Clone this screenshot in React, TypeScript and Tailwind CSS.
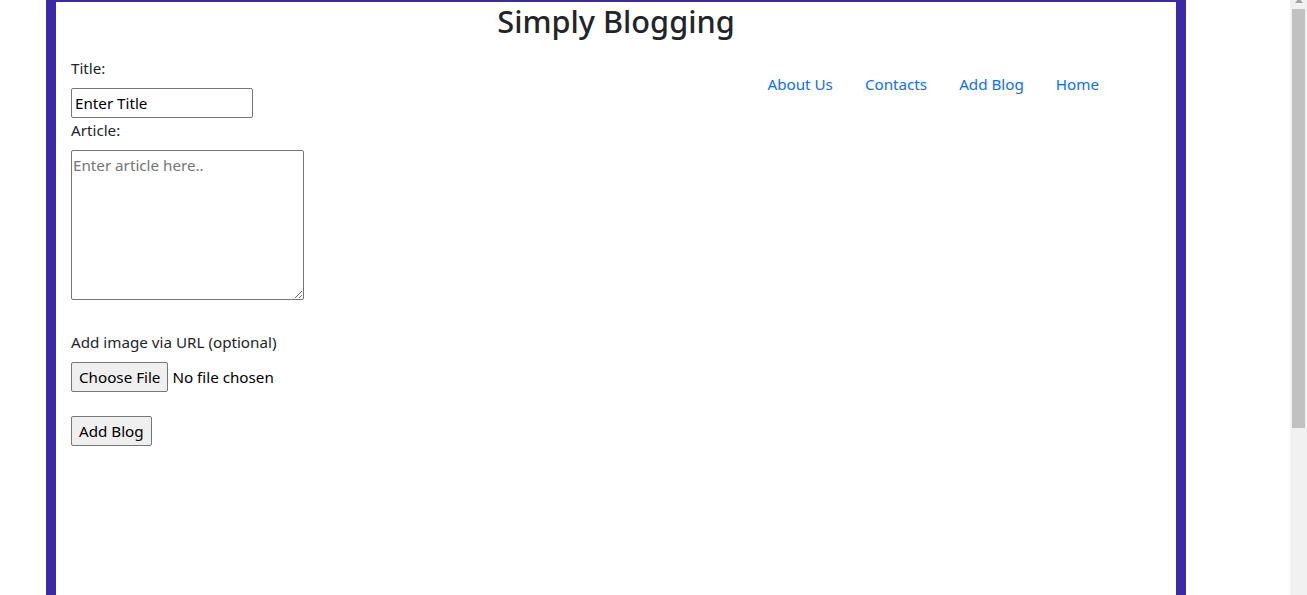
export default function App() {
  const font = { fontFamily: '"Segoe UI", "Noto Sans", "Open Sans", sans-serif' };
  return (
    <div className="flex h-[595px] w-[1307px] overflow-hidden bg-white text-[#212529]" style={font}>
      <div className="w-[1290px] h-full">
        <div className="ml-[46px] w-[1140px] h-full border-x-[10px] border-t-2 border-[#3c29a5] bg-white">
          <h2 className="text-center text-[30.7px] leading-[38px] font-medium">Simply Blogging</h2>
          <div className="flex">
            <form className="pl-[15px] pt-[16px] text-[15.2px] leading-[24px]" onSubmit={(e) => e.preventDefault()}>
              <label className="block mb-2">Title:</label>
              <input
                type="text"
                defaultValue="Enter Title"
                className="block w-[182px] h-[30px] border border-[#767676] rounded-[2px] px-[3px] text-black text-[15.2px]"
              />
              <label className="block mb-2">Article:</label>
              <textarea
                placeholder="Enter article here.."
                className="block w-[233px] h-[150px] border border-[#767676] rounded-[2px] px-[1px] py-[2px] text-[15.2px] placeholder:text-[#757575]"
              />
              <label className="block mt-[30px] mb-2">Add image via URL (optional)</label>
              <div className="flex items-center h-[30px]">
                <button type="button" className="h-[30px] px-[7px] bg-[#efefef] border border-[#767676] rounded-[2px] text-black">
                  Choose File
                </button>
                <span className="ml-[4px] text-black">No file chosen</span>
              </div>
              <button type="submit" className="mt-[24px] h-[30px] px-[7px] bg-[#efefef] border border-[#767676] rounded-[2px] text-black">
                Add Blog
              </button>
            </form>
            <nav className="ml-auto mr-[61px] mt-[32px] flex h-[24px] text-[15.2px] leading-[24px] text-[#0d6efd]">
              <a className="px-4" href="#">About Us</a>
              <a className="px-4" href="#">Contacts</a>
              <a className="px-4" href="#">Add Blog</a>
              <a className="px-4" href="#">Home</a>
            </nav>
          </div>
        </div>
      </div>
      <div className="relative w-[17px] h-full bg-[#f1f1f1]">
        <div className="absolute left-[5px] -top-[2px] w-0 h-0 border-x-[4px] border-x-transparent border-b-[5px] border-b-[#a3a3a3]" />
        <div className="absolute left-[2px] top-[9px] w-[13px] h-[419px] bg-[#c1c1c1]" />
      </div>
    </div>
  );
}
